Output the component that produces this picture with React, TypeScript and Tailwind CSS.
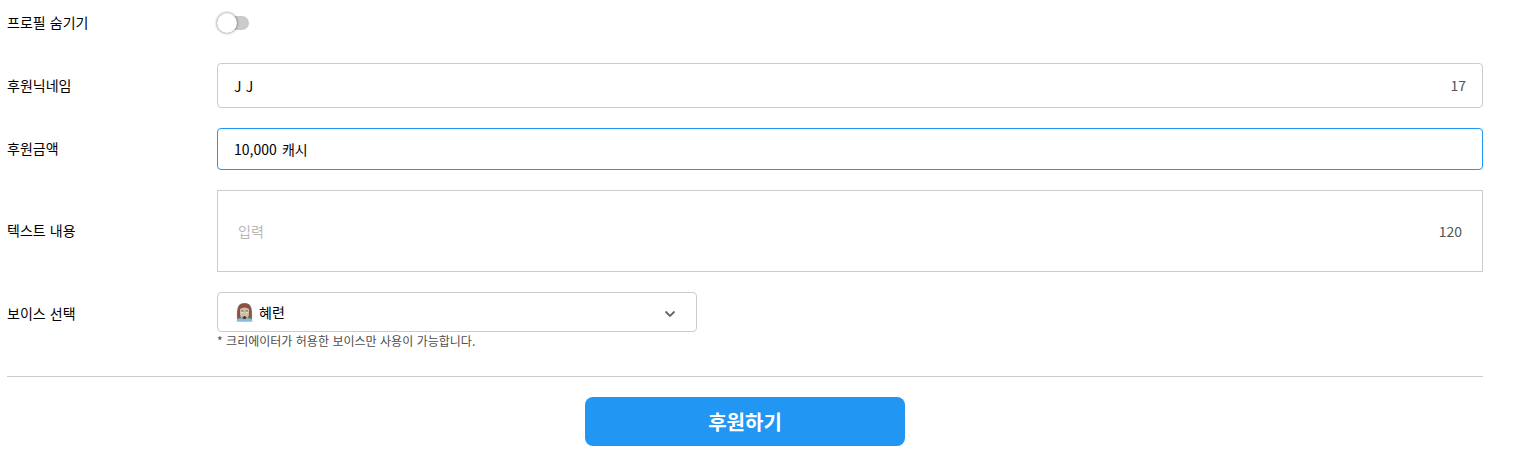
import type { ReactNode } from 'react';

function Row({ label, className, labelClassName = 'pb-[2px]', children }: { label: string; className: string; labelClassName?: string; children: ReactNode }) {
  return (
    <div className={`flex items-center ${className}`}>
      <span className={`w-[210px] shrink-0 text-sm leading-5 [word-spacing:1px] ${labelClassName}`}>{label}</span>
      {children}
    </div>
  );
}

function Avatar() {
  return (
    <svg width="17" height="20" viewBox="0 0 17 20" className="shrink-0" aria-hidden="true">
      <path d="M1 17.500C.5 6 1.500 1 8.500 1S16.500 6 16 17.500z" fill="#77706e" />
      <path d="M2.200 16C1.500 6 2.500 1.800 8.500 1.800S15.500 6 14.800 16l-2-1V7h-8.600v8z" fill="#91503f" />
      <path d="M.5 19.800Q.8 17 4 16.300h9q3.200.7 3.500 3.500z" fill="#83bfdc" />
      <path d="M4 7Q8.500 4 13 7v5q-.5 5-4.500 5T4 12z" fill="#d2bea4" />
      <path d="M5 9h2.500M9.500 9H12" stroke="#5b5048" strokeWidth=".9" />
      <path d="M5.500 10.300h1.500M10 10.300h1.500" stroke="#f7f3ec" strokeWidth="1" />
      <path d="M6.200 15.500Q8.500 12.500 10.800 15.500L9.500 17h-2z" fill="#3e3e40" />
    </svg>
  );
}

export default function App() {
  return (
    <main className="flex h-[460px] w-[1513px] flex-col bg-white pl-[7px] pr-[30px] pt-[13px] font-['Noto_Sans_CJK_KR',sans-serif] text-black">
      <Row label="프로필 숨기기" className="h-5">
        <button type="button" role="switch" aria-checked="false" aria-label="프로필 숨기기" className="flex h-[14px] w-8 items-center rounded-full bg-[#cbcbcb]">
          <span className="size-5 shrink-0 rounded-full bg-white shadow-[0_0_3px_rgba(0,0,0,0.6)]" />
        </button>
      </Row>

      <Row label="후원닉네임" className="mt-[30px] h-[45px]">
        <div className="flex h-full flex-1 items-center justify-between rounded border border-[#cccccc] px-4 text-sm [word-spacing:1px]">
          <span>J J</span>
          <span className="pb-px text-[#555555]">17</span>
        </div>
      </Row>

      <Row label="후원금액" className="mt-5 h-[42px]">
        <div className="flex h-full flex-1 items-center rounded border border-[#2196f3] px-4 text-sm [word-spacing:2px]">
          10,000 캐시
        </div>
      </Row>

      <Row label="텍스트 내용" className="mt-5 h-[82px]">
        <div className="flex h-full flex-1 items-center justify-between border border-[#cccccc] px-5 text-sm">
          <span className="text-[#b8b8b8]">입력</span>
          <span className="text-[#555555]">120</span>
        </div>
      </Row>

      <Row label="보이스 선택" className="mt-5 h-10" labelClassName="pt-px">
        <button type="button" className="flex h-full w-[480px] items-center rounded border border-[#cccccc] pl-[18px] pr-5 text-sm">
          <Avatar />
          <span className="ml-[6px]">혜련</span>
          <svg width="12" height="8" viewBox="0 0 12 8" className="ml-auto mt-1" fill="none" stroke="#666666" strokeWidth="1.800" aria-hidden="true">
            <path d="m1.500 1.500 4.500 4.500 4.500-4.500" />
          </svg>
        </button>
      </Row>
      <p className="ml-[210px] h-5 text-xs leading-[18px] text-[#4d4d4d] [word-spacing:0.800px]">* 크리에이터가 허용한 보이스만 사용이 가능합니다.</p>

      <div className="mt-6 flex justify-center border-t border-[#cccccc] pt-5">
        <button type="button" className="h-[49px] w-80 rounded-lg bg-[#2196f3] text-xl font-bold text-white">후원하기</button>
      </div>
    </main>
  );
}
